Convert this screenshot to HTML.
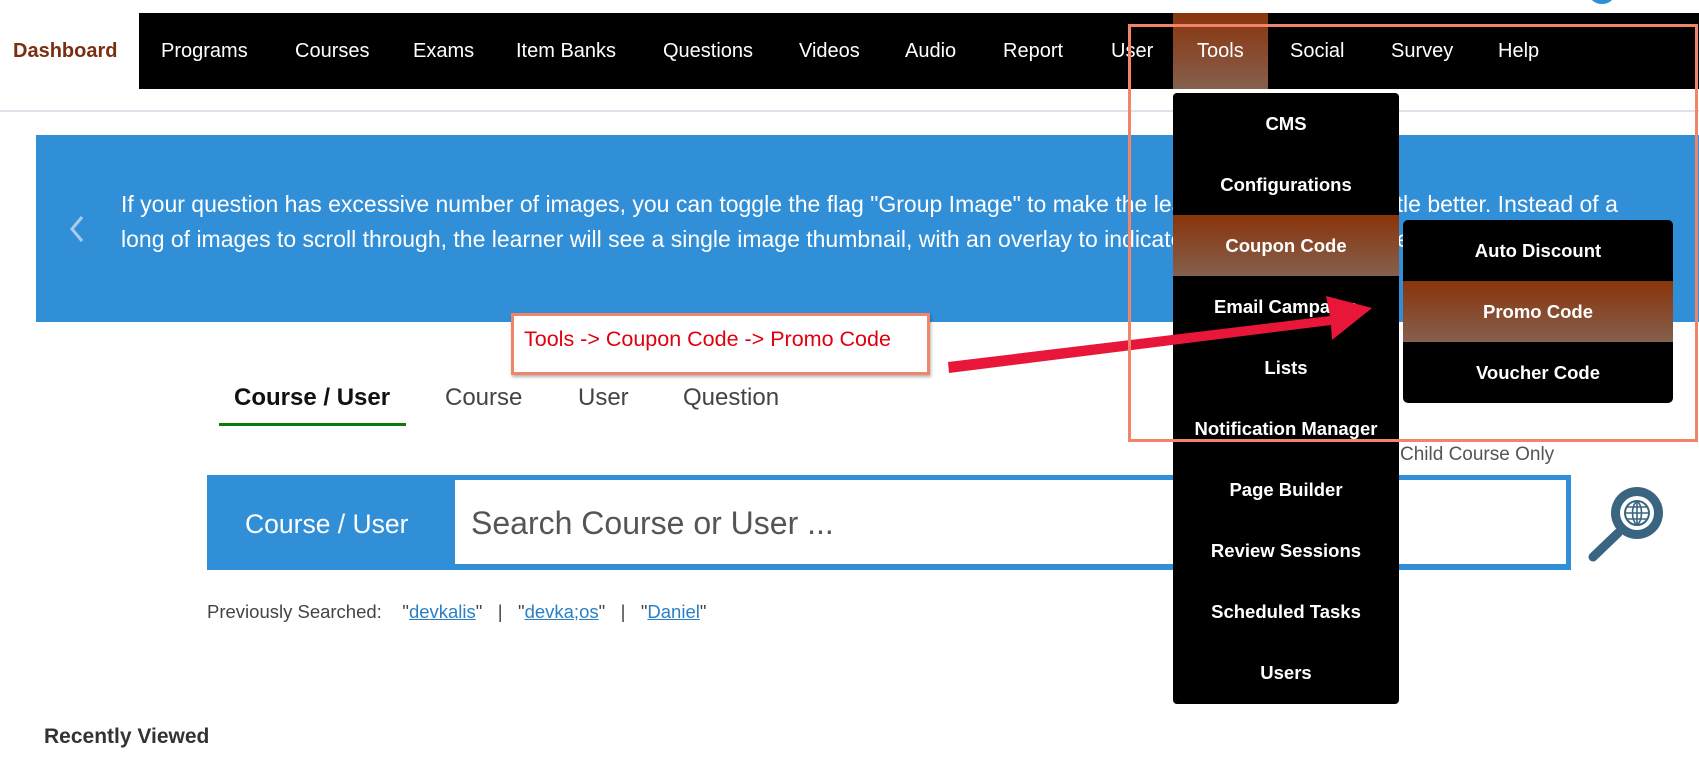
<!DOCTYPE html>
<html><head><meta charset="utf-8"><style>
*{margin:0;padding:0;box-sizing:border-box}
body{width:1699px;height:774px;position:relative;overflow:hidden;background:#fff;font-family:"Liberation Sans",sans-serif}
.a{position:absolute;white-space:nowrap}
.nav{position:absolute;left:139px;top:13px;width:1560px;height:76px;background:#000}
.ni{position:absolute;top:40px;color:#fff;font-size:20px}
.dd{position:absolute;left:1173px;top:93px;width:226px;height:611px;background:#000;border-radius:4px}
.di{position:absolute;left:0;width:100%;height:61px;line-height:61px;text-align:center;color:#fff;font-size:18.5px;font-weight:bold}
.hl{background:linear-gradient(#8a340b,#85604e)}
.sub{position:absolute;left:1403px;top:220px;width:270px;height:183px;background:#000;border-radius:5px;overflow:hidden}
a{color:#2a7fc4}
</style></head><body>
<div class="a" style="left:1590px;top:-14px;width:24px;height:18px;border-radius:50%;background:#2e8fd6"></div>
<div class="a" style="left:13px;top:40px;color:#7a3010;font-weight:bold;font-size:20px">Dashboard</div>
<div class="nav"></div>
<div class="a" style="left:1173px;top:13px;width:95px;height:76px;background:linear-gradient(#8a340b,#85604e)"></div>
<div class="ni a" style="left:161px">Programs</div>
<div class="ni a" style="left:295px">Courses</div>
<div class="ni a" style="left:413px">Exams</div>
<div class="ni a" style="left:516px">Item Banks</div>
<div class="ni a" style="left:663px">Questions</div>
<div class="ni a" style="left:799px">Videos</div>
<div class="ni a" style="left:905px">Audio</div>
<div class="ni a" style="left:1003px">Report</div>
<div class="ni a" style="left:1111px">User</div>
<div class="ni a" style="left:1197px">Tools</div>
<div class="ni a" style="left:1290px">Social</div>
<div class="ni a" style="left:1391px">Survey</div>
<div class="ni a" style="left:1498px">Help</div>
<div class="a" style="left:0;top:110px;width:1699px;height:2px;background:#dde3ea"></div>
<div class="a" style="left:36px;top:135px;width:1663px;height:187px;background:#318fd8"></div>
<svg class="a" style="left:68px;top:215px" width="18" height="28"><path d="M14 2 L4 14 L14 26" stroke="#a9cdee" stroke-width="3" fill="none"/></svg>
<div class="a" style="left:121px;top:187px;color:#fff;font-size:23px;line-height:35px">If your question has excessive number of images, you can toggle the flag "Group Image" to make the l<span style="letter-spacing:0">earning experience a li</span>ttle better. Instead of a<br>long of images to scroll through, the learner will see a single image thumbnail, with an overlay to indicate there are more images in it.</div>
<div class="a" style="left:511px;top:313px;width:419px;height:62px;border:3px solid #f0856a;background:#fff;box-shadow:1px 2px 3px rgba(0,0,0,.3)"></div>
<div class="a" style="left:524px;top:327px;color:#e00010;font-size:21.5px">Tools -&gt; Coupon Code -&gt; Promo Code</div>
<div class="a" style="left:234px;top:384px;font-size:24px;font-weight:bold;color:#111">Course / User</div>
<div class="a" style="left:219px;top:423px;width:187px;height:3px;background:#0a7a0a"></div>
<div class="a" style="left:445px;top:384px;font-size:24px;color:#444">Course</div>
<div class="a" style="left:578px;top:384px;font-size:24px;color:#444">User</div>
<div class="a" style="left:683px;top:384px;font-size:24px;color:#444">Question</div>
<div class="a" style="left:1400px;top:444px;font-size:19px;color:#555">Child Course Only</div>
<div class="a" style="left:207px;top:475px;width:1364px;height:95px;background:#318fd8"></div>
<div class="a" style="left:455px;top:480px;width:1111px;height:84px;background:#fff"></div>
<div class="a" style="left:245px;top:509px;color:#fff;font-size:26.5px">Course / User</div>
<div class="a" style="left:471px;top:505px;color:#555;font-size:32px">Search Course or User ...</div>
<svg class="a" style="left:1583px;top:482px" width="84" height="84" viewBox="0 0 84 84">
<circle cx="54" cy="31" r="26" fill="#3a6580"/><circle cx="54" cy="31" r="17" fill="#fff"/>
<circle cx="54" cy="31" r="12" fill="none" stroke="#3a6580" stroke-width="2"/>
<path d="M42 31H66M54 19V43M44 25H64M44 37H64M54 19C48 24 48 38 54 43M54 19C60 24 60 38 54 43" stroke="#3a6580" stroke-width="1.6" fill="none"/>
<path d="M35 51 L10 75" stroke="#3a6580" stroke-width="9" stroke-linecap="round"/></svg>
<div class="a" style="left:207px;top:601px;font-size:18.5px;color:#444">Previously Searched:&nbsp;&nbsp;&nbsp;&nbsp;"<a href="#">devkalis</a>"&nbsp;&nbsp;&nbsp;|&nbsp;&nbsp;&nbsp;"<a href="#">devka;os</a>"&nbsp;&nbsp;&nbsp;|&nbsp;&nbsp;&nbsp;"<a href="#">Daniel</a>"</div>
<div class="a" style="left:44px;top:725px;font-size:21px;font-weight:bold;color:#333">Recently Viewed</div>
<div class="dd">
<div class="di" style="top:0">CMS</div>
<div class="di" style="top:61px">Configurations</div>
<div class="di hl" style="top:122px">Coupon Code</div>
<div class="di" style="top:183px">Email Campaign</div>
<div class="di" style="top:244px">Lists</div>
<div class="di" style="top:305px">Notification Manager</div>
<div class="di" style="top:366px">Page Builder</div>
<div class="di" style="top:427px">Review Sessions</div>
<div class="di" style="top:488px">Scheduled Tasks</div>
<div class="di" style="top:549px">Users</div>
</div>
<div class="sub">
<div class="di" style="top:0">Auto Discount</div>
<div class="di hl" style="top:61px">Promo Code</div>
<div class="di" style="top:122px">Voucher Code</div>
</div>
<svg class="a" style="left:0;top:0" width="1699" height="774">
<path d="M948 362 L1330 316 L1326 296 L1372 308 L1332 340 L1331 325 L949 373 Z" fill="#e8173a"/>
<rect x="1129.5" y="25.5" width="567" height="415" fill="none" stroke="#f0856a" stroke-width="3"/>
</svg>
</body></html>
